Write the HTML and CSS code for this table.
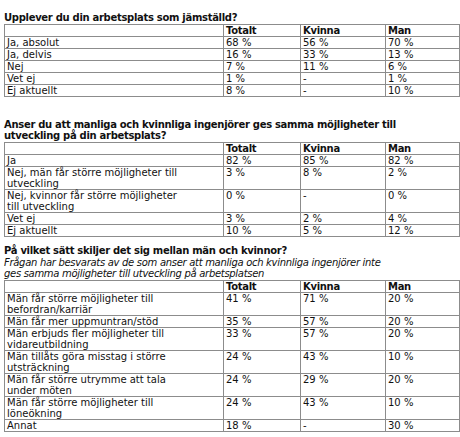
FILE: index.html
```html
<!DOCTYPE html>
<html lang="sv">
<head>
    <meta charset="UTF-8">
    <title>Jämställdhet på arbetsplatsen</title>
    <link rel="stylesheet" href="styles.css">
</head>
<body>
    <section class="survey first">
        <h2 class="question">Upplever du din arbetsplats som jämställd?</h2>
        <table class="results">
            <colgroup>
                <col class="c-label"><col class="c-total"><col class="c-woman"><col class="c-man">
            </colgroup>
            <tr><th></th><th>Totalt</th><th>Kvinna</th><th>Man</th></tr>
            <tr><td>Ja, absolut</td><td>68 %</td><td>56 %</td><td>70 %</td></tr>
            <tr><td>Ja, delvis</td><td>16 %</td><td>33 %</td><td>13 %</td></tr>
            <tr><td>Nej</td><td>7 %</td><td>11 %</td><td>6 %</td></tr>
            <tr><td>Vet ej</td><td>1 %</td><td>-</td><td>1 %</td></tr>
            <tr><td>Ej aktuellt</td><td>8 %</td><td>-</td><td>10 %</td></tr>
        </table>
    </section>

    <section class="survey second">
        <h2 class="question">Anser du att manliga och kvinnliga ingenjörer ges samma möjligheter till<br>utveckling på din arbetsplats?</h2>
        <table class="results">
            <colgroup>
                <col class="c-label"><col class="c-total"><col class="c-woman"><col class="c-man">
            </colgroup>
            <tr><th></th><th>Totalt</th><th>Kvinna</th><th>Man</th></tr>
            <tr><td>Ja</td><td>82 %</td><td>85 %</td><td>82 %</td></tr>
            <tr><td>Nej, män får större möjligheter till<br>utveckling</td><td>3 %</td><td>8 %</td><td>2 %</td></tr>
            <tr><td>Nej, kvinnor får större möjligheter<br>till utveckling</td><td>0 %</td><td>-</td><td>0 %</td></tr>
            <tr><td>Vet ej</td><td>3 %</td><td>2 %</td><td>4 %</td></tr>
            <tr><td>Ej aktuellt</td><td>10 %</td><td>5 %</td><td>12 %</td></tr>
        </table>
    </section>

    <section class="survey third">
        <h2 class="question">På vilket sätt skiljer det sig mellan män och kvinnor?</h2>
        <p class="note">Frågan har besvarats av de som anser att manliga och kvinnliga ingenjörer inte<br>ges samma möjligheter till utveckling på arbetsplatsen</p>
        <table class="results">
            <colgroup>
                <col class="c-label"><col class="c-total"><col class="c-woman"><col class="c-man">
            </colgroup>
            <tr><th></th><th>Totalt</th><th>Kvinna</th><th>Man</th></tr>
            <tr><td>Män får större möjligheter till<br>befordran/karriär</td><td>41 %</td><td>71 %</td><td>20 %</td></tr>
            <tr><td>Män får mer uppmuntran/stöd</td><td>35 %</td><td>57 %</td><td>20 %</td></tr>
            <tr><td>Män erbjuds fler möjligheter till<br>vidareutbildning</td><td>33 %</td><td>57 %</td><td>20 %</td></tr>
            <tr><td>Män tillåts göra misstag i större<br>utsträckning</td><td>24 %</td><td>43 %</td><td>10 %</td></tr>
            <tr><td>Män får större utrymme att tala<br>under möten</td><td>24 %</td><td>29 %</td><td>20 %</td></tr>
            <tr><td>Män får större möjligheter till<br>löneökning</td><td>24 %</td><td>43 %</td><td>10 %</td></tr>
            <tr><td>Annat</td><td>18 %</td><td>-</td><td>30 %</td></tr>
        </table>
    </section>
</body>
</html>
```

FILE: styles.css
```css
body {
    margin: 0;
    padding: 12px 0 0 4px;
    font-family: "DejaVu Sans", Verdana, sans-serif;
    font-size: 10px;
    color: #111;
    background: #fff;
}
.survey {
    width: 455px;
}
.second {
    margin-top: 22px;
}
.third {
    margin-top: 8px;
}
.question {
    margin: 0 0 1px 0;
    font-size: 10px;
    line-height: 11px;
    font-weight: bold;
    letter-spacing: -0.3px;
}
.note {
    margin: 0 0 1px 0;
    line-height: 11px;
    font-style: italic;
    letter-spacing: -0.3px;
}
.results {
    width: 455px;
    border-collapse: collapse;
    table-layout: fixed;
}
.results .c-label {
    width: 219px;
}
.results .c-total {
    width: 77px;
}
.results .c-woman {
    width: 85px;
}
.results .c-man {
    width: 74px;
}
.results th,
.results td {
    border: 1px solid #8c8c8c;
    padding: 0 2px;
    line-height: 11px;
    text-align: left;
    vertical-align: top;
}
.results th {
    font-weight: bold;
    letter-spacing: -0.3px;
}
```
